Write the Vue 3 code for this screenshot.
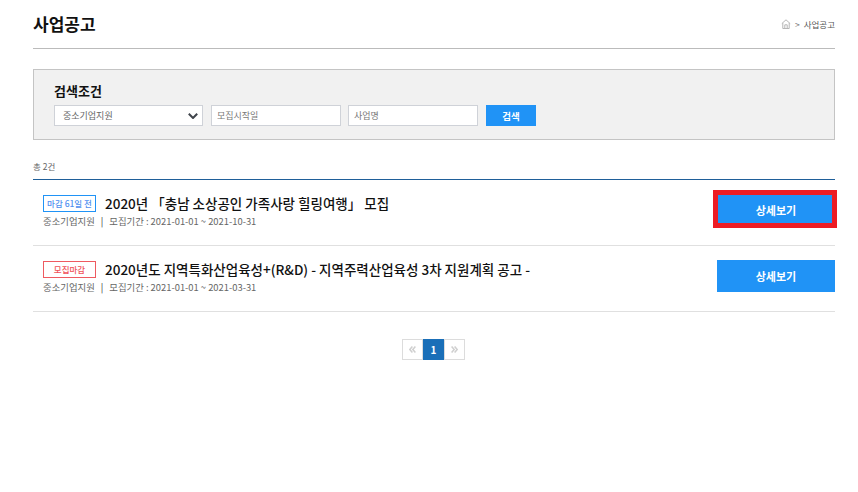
<template>
  <div class="page">
    <div class="page-head">
      <h2 class="page-title">사업공고</h2>
      <div class="crumb">
        <svg class="home-icon" width="10" height="10" viewBox="0 0 10 10" fill="none" stroke="#b5b5b5" stroke-width="1">
          <path d="M.8 4.6 5 .8l4.2 3.8M1.800 4v5.500h6.400V4M3.800 9.500V5.800h2.400v3.700" />
        </svg>
        <span class="crumb-sep">&gt;</span>
        <span>사업공고</span>
      </div>
    </div>

    <div class="search-box">
      <h3 class="search-title">검색조건</h3>
      <div class="search-row">
        <div class="select-box">
          <span>중소기업지원</span>
          <svg width="10" height="6" viewBox="0 0 10 6" fill="none" stroke="#3f444b" stroke-width="2">
            <path d="M.8.8 5 5 9.200.8" />
          </svg>
        </div>
        <input class="field" type="text" placeholder="모집시작일">
        <input class="field field-name" type="text" placeholder="사업명">
        <button class="search-btn">검색</button>
      </div>
    </div>

    <p class="total">총 2건</p>

    <ul class="list">
      <li v-for="item in items" :key="item.title" class="row">
        <div class="row-main">
          <div class="row-title">
            <span class="badge" :class="item.badgeClass">{{ item.badge }}</span>
            <strong>{{ item.title }}</strong>
          </div>
          <p class="row-meta">중소기업지원<span class="meta-sep">|</span>모집기간 : {{ item.period }}</p>
        </div>
        <div class="detail-wrap">
          <button class="detail-btn">상세보기</button>
          <span v-if="item.marked" class="marker"></span>
        </div>
      </li>
    </ul>

    <div class="pager">
      <span class="pager-item arrow">
        <svg width="7" height="7" viewBox="0 0 7 7" fill="none" stroke="#cfcfcf" stroke-width="1.500">
          <path d="M3.400.5.800 3.500l2.600 3M6.400.5 3.800 3.500l2.600 3" />
        </svg>
      </span>
      <span class="pager-item current">1</span>
      <span class="pager-item arrow">
        <svg width="7" height="7" viewBox="0 0 7 7" fill="none" stroke="#cfcfcf" stroke-width="1.500">
          <path d="M.6.5l2.600 3-2.600 3M3.600.5l2.600 3-2.600 3" />
        </svg>
      </span>
    </div>
  </div>
</template>

<script setup>
const items = [
  {
    badge: '마감 61일 전',
    badgeClass: 'badge-open',
    title: '2020년 「충남 소상공인 가족사랑 힐링여행」 모집',
    period: '2021-01-01 ~ 2021-10-31',
    marked: true
  },
  {
    badge: '모집마감',
    badgeClass: 'badge-closed',
    title: '2020년도 지역특화산업육성+(R&D) - 지역주력산업육성 3차 지원계획 공고 -',
    period: '2021-01-01 ~ 2021-03-31',
    marked: false
  }
]
</script>

<style>
html,
body {
  margin: 0;
  background: #fff;
}
</style>

<style scoped>
.page {
  width: 802px;
  height: 492px;
  margin-left: 33px;
  font-family: "Noto Sans CJK KR", "Noto Sans", sans-serif;
  color: #111;
}

.page-head {
  display: flex;
  justify-content: space-between;
  align-items: center;
  height: 48px;
  border-bottom: 1px solid #bbb;
}

.page-title {
  margin: 0;
  font-size: 17px;
  font-weight: 700;
  line-height: 48px;
  color: #111;
}

.crumb {
  display: flex;
  align-items: center;
  gap: 4px;
  font-size: 8.500px;
  color: #555;
}

.crumb-sep {
  color: #777;
}

.search-box {
  height: 69px;
  margin-top: 20px;
  padding: 0 20px;
  border: 1px solid #c4c4c4;
  background: #f1f1f1;
}

.search-title {
  margin: 0;
  padding-top: 11px;
  height: 24px;
  font-size: 13px;
  line-height: 20px;
  font-weight: 700;
  color: #111;
}

.search-row {
  display: flex;
  align-items: stretch;
  height: 21px;
}

.select-box {
  display: flex;
  justify-content: space-between;
  align-items: center;
  box-sizing: border-box;
  width: 149px;
  padding: 0 4px 0 8px;
  border: 1px solid #cfd2d8;
  background: #fff;
  font-size: 9px;
  color: #666;
}

.field {
  box-sizing: border-box;
  width: 130px;
  height: 21px;
  margin: 0 0 0 8px;
  padding: 0 5px;
  border: 1px solid #cfd2d8;
  background: #fff;
  font-family: inherit;
  font-size: 9px;
  outline: none;
}

.field::placeholder {
  color: #777;
  opacity: 1;
}

.field-name {
  margin-left: 7px;
}

.search-btn {
  width: 50px;
  height: 21px;
  margin-left: 8px;
  padding: 0;
  border: 0;
  background: #2093f6;
  color: #fff;
  font-family: inherit;
  font-size: 9.500px;
  font-weight: 700;
}

.total {
  margin: 0;
  height: 40px;
  padding-top: 20px;
  box-sizing: border-box;
  border-bottom: 1px solid #1f5f99;
  font-size: 8.500px;
  line-height: 13px;
  color: #666;
}

.list {
  margin: 0;
  padding: 0;
  list-style: none;
}

.row {
  display: flex;
  justify-content: space-between;
  align-items: flex-start;
  box-sizing: border-box;
  height: 66px;
  padding: 14px 0 0 10px;
  border-bottom: 1px solid #e0e0e0;
}

.row-title {
  display: flex;
  align-items: center;
  gap: 9px;
  font-size: 13.500px;
  line-height: 18px;
}

.row-title strong {
  font-weight: 500;
  color: #111;
}

.badge {
  box-sizing: border-box;
  width: 53px;
  height: 17px;
  border: 1px solid;
  background: #fff;
  font-size: 8.500px;
  font-weight: 500;
  line-height: 15px;
  text-align: center;
}

.badge-open {
  border-color: #2093f6;
  color: #4f8ff0;
}

.badge-closed {
  border-color: #ee5a60;
  color: #f0525a;
}

.row-meta {
  margin: 3px 0 0;
  font-size: 9.400px;
  line-height: 13px;
  color: #666;
}

.meta-sep {
  margin: 0 6px;
  color: #333;
}

.detail-wrap {
  position: relative;
  width: 118px;
  height: 32px;
}

.detail-btn {
  display: block;
  width: 100%;
  height: 100%;
  padding: 0;
  border: 0;
  background: #2093f6;
  color: #fff;
  font-family: inherit;
  font-size: 11px;
  font-weight: 700;
}

.marker {
  position: absolute;
  top: -4px;
  left: -4px;
  box-sizing: border-box;
  width: 124px;
  height: 38px;
  border: 5px solid #ed1c24;
}

.pager {
  display: flex;
  justify-content: center;
  margin-top: 27px;
  padding-right: 1px;
}

.pager-item {
  display: flex;
  justify-content: center;
  align-items: center;
  box-sizing: border-box;
  width: 21px;
  height: 21px;
  font-size: 10px;
  font-weight: 700;
}

.arrow {
  border: 1px solid #dcdcdc;
  background: #fff;
}

.current {
  background: #1a6fb8;
  color: #fff;
}
</style>
